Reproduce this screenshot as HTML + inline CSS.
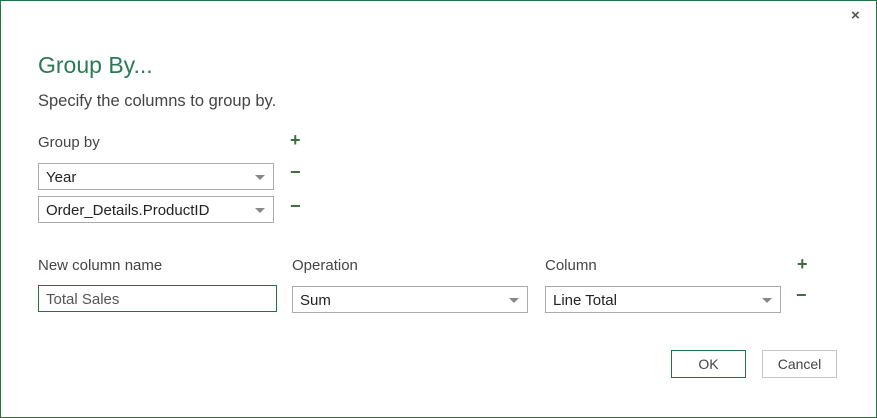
<!DOCTYPE html><html><head><style>
body{margin:0;width:877px;height:418px;overflow:hidden;background:#fff;font-family:"Liberation Sans",sans-serif;}
#f{position:absolute;left:0;top:0;width:875px;height:416px;border:1px solid #217346;}
.a{position:absolute;white-space:nowrap;}
.t{color:#444;font-size:15px;}
.box{position:absolute;box-sizing:border-box;border:1px solid #ababab;height:27px;font-size:15px;color:#222;padding:5px 0 0 7px;}
.arr{position:absolute;right:8px;top:11px;width:0;height:0;border-left:5px solid transparent;border-right:5px solid transparent;border-top:5px solid #888;}
.pl,.mi{position:absolute;color:#3c6e3c;font-weight:bold;font-size:18px;line-height:18px;}
.btn{position:absolute;box-sizing:border-box;height:28px;width:75px;font-size:14px;color:#444;text-align:center;line-height:26px;}
</style></head><body><div id="f"></div>
<div class="a" style="left:851px;top:7px;font-size:15px;color:#555;font-weight:bold">×</div>
<div class="a" style="left:38px;top:52px;font-size:23px;color:#2a7a56">Group By...</div>
<div class="a t" style="left:38px;top:92px;font-size:16.5px">Specify the columns to group by.</div>
<div class="a t" style="left:38px;top:134px">Group by</div>
<div class="pl" style="left:290px;top:131px">+</div>
<div class="box" style="left:38px;top:163px;width:236px">Year<div class="arr"></div></div>
<div class="mi" style="left:290px;top:163px">−</div>
<div class="box" style="left:38px;top:196px;width:236px">Order_Details.ProductID<div class="arr"></div></div>
<div class="mi" style="left:290px;top:197px">−</div>
<div class="a t" style="left:38px;top:257px">New column name</div>
<div class="a t" style="left:292px;top:257px">Operation</div>
<div class="a t" style="left:545px;top:257px">Column</div>
<div class="pl" style="left:797px;top:255px">+</div>
<div class="box" style="left:38px;top:285px;width:239px;border-color:#217346;color:#555">Total Sales</div>
<div class="box" style="left:292px;top:286px;width:236px">Sum<div class="arr"></div></div>
<div class="box" style="left:545px;top:286px;width:236px">Line Total<div class="arr"></div></div>
<div class="mi" style="left:796px;top:286px">−</div>
<div class="btn" style="left:671px;top:350px;border:1px solid #217346">OK</div>
<div class="btn" style="left:762px;top:350px;border:1px solid #c6c6c6">Cancel</div>
</body></html>
